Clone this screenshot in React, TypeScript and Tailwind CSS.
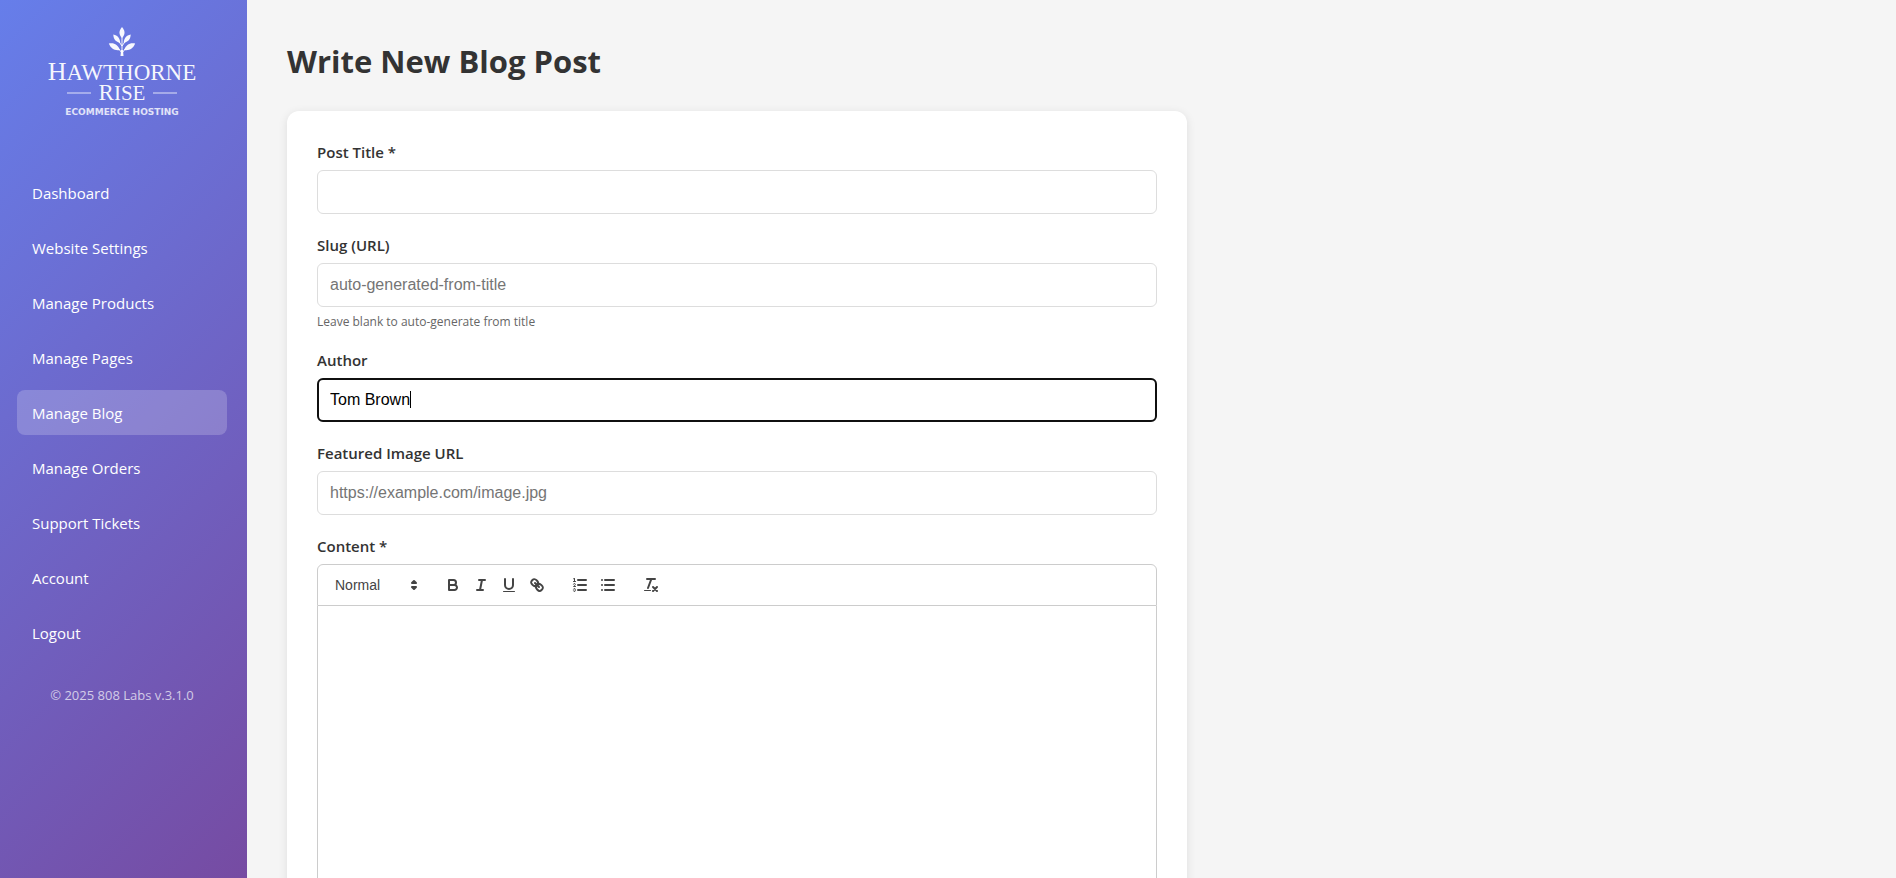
import type { InputHTMLAttributes, ReactNode } from "react";

const navItems = [
  "Dashboard",
  "Website Settings",
  "Manage Products",
  "Manage Pages",
  "Manage Blog",
  "Manage Orders",
  "Support Tickets",
  "Account",
  "Logout",
];

export default function App() {
  return (
    <div className="flex min-h-screen bg-[#f5f5f5] font-['Open_Sans',sans-serif] text-[#333]">
      <Sidebar active="Manage Blog" />
      <main className="min-w-0 flex-1 p-10">
        <h1 className="mb-7 text-[31px] leading-[43px] font-bold">Write New Blog Post</h1>
        <form className="flex max-w-[900px] flex-col gap-5 rounded-xl bg-white p-[30px] shadow-[0_2px_10px_rgba(0,0,0,0.1)]">
          <Field id="title" label="Post Title *" required />
          <Field
            id="slug"
            label="Slug (URL)"
            placeholder="auto-generated-from-title"
            hint="Leave blank to auto-generate from title"
          />
          <Field id="author" label="Author" defaultValue="Tom Brown" autoFocus />
          <Field id="image" label="Featured Image URL" placeholder="https://example.com/image.jpg" />
          <Editor />
        </form>
      </main>
    </div>
  );
}

function Sidebar({ active }: { active: string }) {
  return (
    <aside className="sticky top-0 h-screen w-[247px] shrink-0 bg-[linear-gradient(135deg,#667eea_0%,#764ba2_100%)] pt-6 pr-5 pl-[17px] text-white">
      <Logo />
      <nav className="mt-12">
        <ul className="flex flex-col gap-2.5">
          {navItems.map((item) => (
            <li key={item}>
              <a
                href="#"
                className={`block rounded-lg px-[15px] pt-[13px] pb-[11px] text-[15px] leading-[21px] hover:bg-white/20 ${item === active ? "bg-white/20" : ""}`}
              >
                {item}
              </a>
            </li>
          ))}
        </ul>
      </nav>
      <p className="mt-[30px] text-center text-[13px] leading-5 text-white/70">© 2025 808 Labs v.3.1.0</p>
    </aside>
  );
}

function Logo() {
  return (
    <div className="flex h-[98px] flex-col items-center text-white/95">
      <svg viewBox="0 0 28 32" className="mt-[2px] mb-1 h-8 w-7" fill="currentColor" aria-hidden="true">
        <path d="M14 1c3.400 4 3.400 7.500 0 11c-3.400-3.500-3.400-7 0-11Z" />
        <path d="M5.300 8.500c4.400.9 6.700 3.700 7 8.300c-4.500-.8-6.800-3.500-7-8.300Z" />
        <path d="M22.700 8.500c-4.400.9-6.700 3.700-7 8.300c4.500-.8 6.800-3.500 7-8.300Z" />
        <path d="M.8 17.600c5.300-1.200 9 1.200 11.200 6.400c-5.300.9-9-1.200-11.200-6.400Z" />
        <path d="M27.200 17.600c-5.300-1.200-9 1.200-11.200 6.400c5.300.9 9-1.200 11.200-6.400Z" />
        <path d="M14 11v18M14 20l-3.500-5M14 20l3.500-5M14 27l-4-5M14 27l4-5" fill="none" stroke="currentColor" strokeWidth="1" />
        <path d="M13 24h2l.5 6h-3Z" />
      </svg>
      <div className="font-['Liberation_Serif',serif] text-[23px] leading-5">
        <span className="text-[26px] leading-5">H</span>AWTHORNE
      </div>
      <div className="flex items-center gap-2 font-['Liberation_Serif',serif] text-[21px] leading-5">
        <span className="h-0.5 w-6 bg-white/40" />
        <span>
          <span className="text-[23px] leading-5">R</span>ISE
        </span>
        <span className="h-0.5 w-6 bg-white/40" />
      </div>
      <div className="mt-0.5 font-['DejaVu_Sans',sans-serif] text-[9px] leading-[14px] font-bold text-white/80">
        ECOMMERCE HOSTING
      </div>
    </div>
  );
}

type FieldProps = InputHTMLAttributes<HTMLInputElement> & { id: string; label: string; hint?: string };

function Field({ id, label, hint, ...props }: FieldProps) {
  return (
    <div>
      <label htmlFor={id} className="mb-1.5 block text-[15px] leading-[23px] font-semibold">
        {label}
      </label>
      <div className="relative">
        <input
          id={id}
          type="text"
          className="block h-11 w-full rounded-md border border-[#ddd] bg-white px-3 font-['Liberation_Sans',sans-serif] text-base text-black caret-transparent placeholder:text-[#757575] focus:outline-2 focus:-outline-offset-2 focus:outline-[#101010]"
          {...props}
        />
        {props.autoFocus && <span className="pointer-events-none absolute top-[13px] left-[93px] h-[17px] w-px bg-black" />}
      </div>
      {hint && <p className="mt-1.5 -mb-px text-[12px] leading-[17px] text-[#666]">{hint}</p>}
    </div>
  );
}

function Editor() {
  return (
    <div>
      <div id="content-label" className="mb-1.5 text-[15px] leading-[23px] font-semibold">
        Content *
      </div>
      <div className="flex gap-[15px] rounded-t-md border border-[#ccc] p-2 font-['Liberation_Sans',sans-serif] text-[#444]">
        <div className="relative h-6 w-[98px]">
          <select
            aria-label="Text style"
            defaultValue="Normal"
            className="h-6 w-full appearance-none bg-transparent pl-[9px] text-sm font-medium outline-none"
          >
            <option>Normal</option>
            <option>Heading 1</option>
            <option>Heading 2</option>
            <option>Heading 3</option>
          </select>
          <svg
            viewBox="0 0 18 18"
            className="pointer-events-none absolute top-[3px] right-px size-[18px]"
            fill="none"
            stroke="currentColor"
            strokeWidth="2"
            strokeLinecap="round"
            strokeLinejoin="round"
          >
            <polygon points="7 11 9 13 11 11 7 11" />
            <polygon points="7 7 9 5 11 7 7 7" />
          </svg>
        </div>
        <div className="flex">
          <ToolButton label="Bold">
            <path d="M5,4H9.5A2.5,2.5,0,0,1,12,6.5v0A2.5,2.5,0,0,1,9.5,9H5V4Z" />
            <path d="M5,9h5.500A2.5,2.5,0,0,1,13,11.5v0A2.5,2.5,0,0,1,10.500,14H5V9Z" />
          </ToolButton>
          <ToolButton label="Italic">
            <path d="M7,4H13M5,14H11M8,14L10,4" />
          </ToolButton>
          <ToolButton label="Underline">
            <path d="M5,3V9a4.012,4.012,0,0,0,4,4H9a4.012,4.012,0,0,0,4-4V3" />
            <rect x="3" y="15" width="12" height="1" rx="0.5" fill="currentColor" stroke="none" />
          </ToolButton>
          <ToolButton label="Link">
            <path d="M7,7L11,11" />
            <path d="M8.9,4.577a3.476,3.476,0,0,1,.36,4.679A3.476,3.476,0,0,1,4.577,8.9C3.185,7.5,2.035,6.4,4.217,4.217S7.5,3.185,8.9,4.577Z" />
            <path d="M13.423,9.1a3.476,3.476,0,0,0-4.679-.36,3.476,3.476,0,0,0,.36,4.679c1.392,1.392,2.5,2.542,4.679.36S14.815,10.5,13.423,9.1Z" />
          </ToolButton>
        </div>
        <div className="flex">
          <ToolButton label="Numbered list">
            <path d="M7,4H15M7,9H15M7,14H15" />
            <path strokeWidth="1" d="M2.5,5.5H4.5" />
            <path
              fill="currentColor"
              stroke="none"
              d="M3.5,6A0.5,0.5,0,0,1,3,5.5V3.085l-0.276.138A0.5,0.5,0,0,1,2.053,3c-0.124-.247-0.023-0.324.224-0.447l1-.5A0.5,0.5,0,0,1,4,2.5v3A0.5,0.5,0,0,1,3.5,6Z"
            />
            <path strokeWidth="1" d="M4.5,10.5h-2c0-.234,1.85-1.076,1.85-2.234A0.959,0.959,0,0,0,2.5,8.156" />
            <path
              strokeWidth="1"
              d="M2.5,14.846a0.959,0.959,0,0,0,1.85-.109A0.7,0.7,0,0,0,3.75,14a0.688,0.688,0,0,0,.6-0.736,0.959,0.959,0,0,0-1.85-.109"
            />
          </ToolButton>
          <ToolButton label="Bulleted list">
            <path d="M6,4H15M6,9H15M6,14H15M3,4H3M3,9H3M3,14H3" />
          </ToolButton>
        </div>
        <ToolButton label="Clear formatting">
          <path d="M5,3H13M6,12L9.35,3M11,11L15,15M15,11L11,15" />
          <rect x="2" y="14" width="7" height="1" rx="0.5" fill="currentColor" stroke="none" />
        </ToolButton>
      </div>
      <div
        contentEditable
        suppressContentEditableWarning
        role="textbox"
        aria-labelledby="content-label"
        className="min-h-[400px] border border-t-0 border-[#ccc] px-4 py-3 font-['Liberation_Sans',sans-serif] text-sm outline-none"
      />
    </div>
  );
}

function ToolButton({ label, children }: { label: string; children: ReactNode }) {
  return (
    <button type="button" aria-label={label} className="h-6 w-7 px-[5px] py-[3px] hover:text-[#06c]">
      <svg
        viewBox="0 0 18 18"
        className="size-[18px]"
        fill="none"
        stroke="currentColor"
        strokeWidth="2"
        strokeLinecap="round"
        strokeLinejoin="round"
      >
        {children}
      </svg>
    </button>
  );
}
